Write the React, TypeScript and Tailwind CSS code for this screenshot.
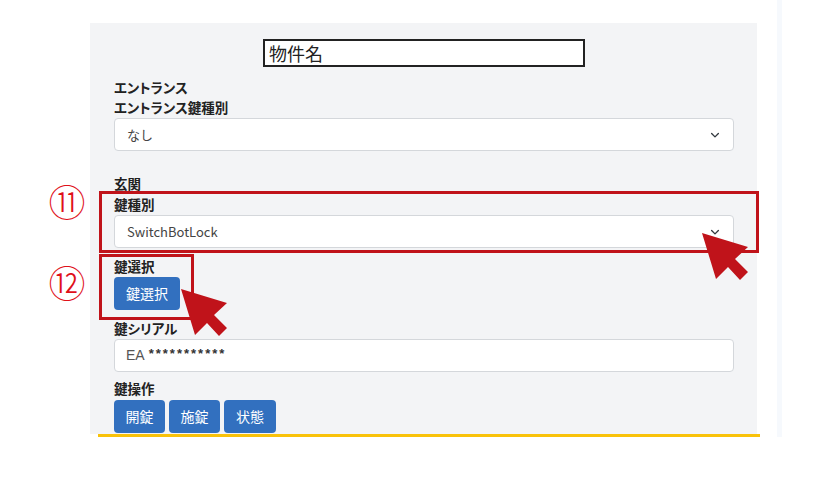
import React from "react";

function Chevron() {
  return (
    <svg width="12" height="12" viewBox="0 0 16 16" fill="none" className="shrink-0">
      <path d="M3.5 6l4.5 4.5L12.5 6" stroke="#343a40" strokeWidth="1.8" strokeLinecap="round" strokeLinejoin="round" />
    </svg>
  );
}

function Select({ value }: { value: string }) {
  return (
    <div className="h-[33px] w-full bg-white border border-[#d4d7db] rounded-[4px] flex items-center justify-between pl-[12px] pr-[12px]">
      <span className="text-[13px] text-[#444]">{value}</span>
      <Chevron />
    </div>
  );
}

function Label({ children }: { children: React.ReactNode }) {
  return (
    <div className="text-[13.5px] leading-[20px] font-semibold text-[#222] [font-feature-settings:'palt']">
      {children}
    </div>
  );
}

function Btn({ children, w }: { children: React.ReactNode; w: string }) {
  return (
    <div className={`h-[33px] ${w} bg-[#3270bf] rounded-[4px] flex items-center justify-center text-white text-[14px]`}>
      {children}
    </div>
  );
}

function Arrow({ x, y }: { x: number; y: number }) {
  return (
    <svg
      width="50"
      height="50"
      viewBox="0 0 50 50"
      className="absolute"
      style={{ left: x, top: y }}
    >
      <polygon
        points="0,0 14,46 26,34 38,47 46,39 33,26 46,14"
        fill="#c0131a"
      />
    </svg>
  );
}

export default function App() {
  return (
    <div className="relative w-[815px] h-[487px] bg-white overflow-hidden font-['Noto_Sans_CJK_JP','Noto_Sans',sans-serif]">
      <div className="flex">
        <div className="ml-[90px] w-[667px] pt-[23px]">
          <div className="h-[411px] bg-[#f3f4f6] pl-[24px] pr-[23px] pt-[16px]">
            <div className="mx-auto w-[322px] h-[28px] border-2 border-[#222] bg-white flex items-center pl-[4px] text-[18px] leading-none text-[#222]">
              物件名
            </div>
            <div className="mt-[10px]">
              <Label>エントランス</Label>
              <Label>エントランス鍵種別</Label>
              <div className="mt-[1px]">
                <Select value="なし" />
              </div>
            </div>
            <div className="mt-[22px]">
              <Label>玄関</Label>
              <div className="mt-[1px]">
                <Label>鍵種別</Label>
              </div>
              <div className="mt-[1px]">
                <Select value="SwitchBotLock" />
              </div>
            </div>
            <div className="mt-[8px]">
              <Label>鍵選択</Label>
              <div className="mt-[1px] flex">
                <Btn w="w-[66px]">鍵選択</Btn>
              </div>
            </div>
            <div className="mt-[8px]">
              <Label>鍵シリアル</Label>
              <div className="mt-[1px] h-[33px] w-full bg-white border border-[#d4d7db] rounded-[4px] flex items-center pl-[11px]">
                <span className="text-[14px] text-[#555] font-['Liberation_Sans',sans-serif]">EA</span>
                <span className="ml-[4px] text-[13px] tracking-[2px] font-semibold text-[#333] -mt-[4px] font-['Liberation_Sans',sans-serif]">***********</span>
              </div>
            </div>
            <div className="mt-[6px]">
              <Label>鍵操作</Label>
              <div className="mt-[2px] flex gap-[4px]">
                <Btn w="w-[51px]">開錠</Btn>
                <Btn w="w-[51px]">施錠</Btn>
                <Btn w="w-[52px]">状態</Btn>
              </div>
            </div>
          </div>
          <div className="ml-[8px] w-[662px] h-[3px] bg-[#f9c20a]" />
        </div>
        <div className="ml-[20px] w-[5px] h-[437px] bg-[#f6f9fd]" />
      </div>

      {/* annotation overlays */}
      <div className="absolute left-[99px] top-[191px] w-[660px] h-[62px] border-[3px] border-[#c0131a]" />
      <div className="absolute left-[99px] top-[254px] w-[95px] h-[66px] border-[3px] border-[#c0131a]" />
      <div className="absolute left-[48px] top-[181px] w-[38px] text-center text-[37px] leading-[40px] text-[#e0101a] font-['Noto_Sans_CJK_JP',sans-serif] font-light">⑪</div>
      <div className="absolute left-[48px] top-[262px] w-[38px] text-center text-[37px] leading-[40px] text-[#e0101a] font-['Noto_Sans_CJK_JP',sans-serif] font-light">⑫</div>
      <Arrow x={702} y={233} />
      <Arrow x={181} y={289} />
    </div>
  );
}
